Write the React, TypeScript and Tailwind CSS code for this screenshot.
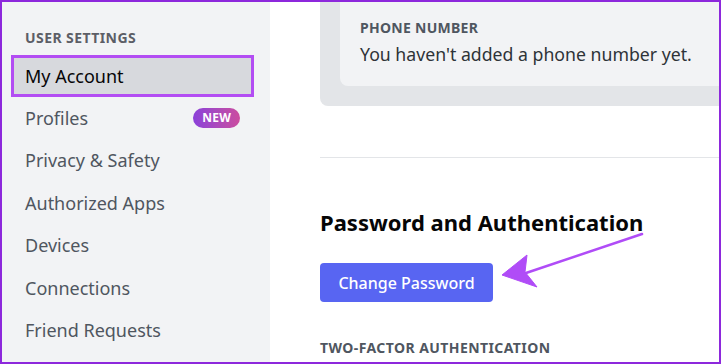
import React from "react";

const navItems = [
  "Privacy & Safety",
  "Authorized Apps",
  "Devices",
  "Connections",
  "Friend Requests",
];

const font = { fontFamily: "'Noto Sans', 'Open Sans', sans-serif" };

const Sidebar: React.FC = () => {
  return (
    <div className="w-[268px] shrink-0 bg-[#f2f3f5] pl-[9px] pr-[16px]">
      <div className="mt-[28px] mb-[9px] px-[14px] h-4 leading-4 text-[14px] font-bold tracking-[0.03em] text-[#5c5e66]">
        USER SETTINGS
      </div>
      <div className="h-[42px] flex items-center px-[11px] border-[3px] border-[#b34df3] bg-[#d7d9dd] text-[18px] text-[#060607]">
        My Account
      </div>
      <div className="h-[42.5px] flex items-center justify-between px-[14px] text-[18px] text-[#4f5660]">
        <span>Profiles</span>
        <span className="h-[20px] px-[9px] flex items-center rounded-full bg-gradient-to-r from-[#8b3fd9] to-[#cc4b9e] text-white text-[12px] font-bold tracking-[0.02em]">
          NEW
        </span>
      </div>
      {navItems.map((item) => (
        <div
          key={item}
          className="h-[42.5px] flex items-center px-[14px] text-[18px] text-[#4f5660]"
        >
          {item}
        </div>
      ))}
    </div>
  );
};

const Arrow: React.FC = () => (
  <svg
    className="absolute left-[490px] top-[225px]"
    width="160"
    height="70"
    viewBox="0 0 160 70"
  >
    <line x1="150" y1="7" x2="34" y2="46" stroke="#b04cf7" strokeWidth="2.5" strokeLinecap="round" />
    <polygon points="10,48 35,28 33,45 45,60" fill="#b04cf7" strokeLinejoin="round" stroke="#b04cf7" strokeWidth="1" />
  </svg>
);

const App: React.FC = () => {
  return (
    <div
      className="relative w-[721px] h-[364px] overflow-hidden border-2 border-[#8d28dc] flex bg-white"
      style={font}
    >
      <Sidebar />
      <div className="flex-1 overflow-hidden pl-[50px]">
        <div className="w-[460px] bg-[#e3e5e8] rounded-bl-lg pl-[20px] pb-[20px]">
          <div className="bg-[#f2f3f5] rounded-bl-lg pl-[20px] pt-[18px] pb-[20px]">
            <div className="h-4 leading-4 text-[14px] font-bold tracking-[0.02em] text-[#4f5660]">
              PHONE NUMBER
            </div>
            <div className="mt-[6px] h-6 leading-6 text-[17.7px] text-[#2e3338]">
              You haven't added a phone number yet.
            </div>
          </div>
        </div>
        <div className="mt-[51px] h-px bg-[#e3e5e8]" />
        <div className="mt-[51px] h-[26px] leading-[26px] text-[22px] font-bold text-[#060607]">
          Password and Authentication
        </div>
        <button className="mt-[28px] w-[173px] h-[39px] rounded bg-[#5865f2] text-white text-[16px] font-medium">
          Change Password
        </button>
        <div className="mt-[38px] h-4 leading-4 text-[14px] font-bold tracking-[0.03em] text-[#4f5660]">
          TWO-FACTOR AUTHENTICATION
        </div>
      </div>
      <Arrow />
    </div>
  );
};

export default App;
